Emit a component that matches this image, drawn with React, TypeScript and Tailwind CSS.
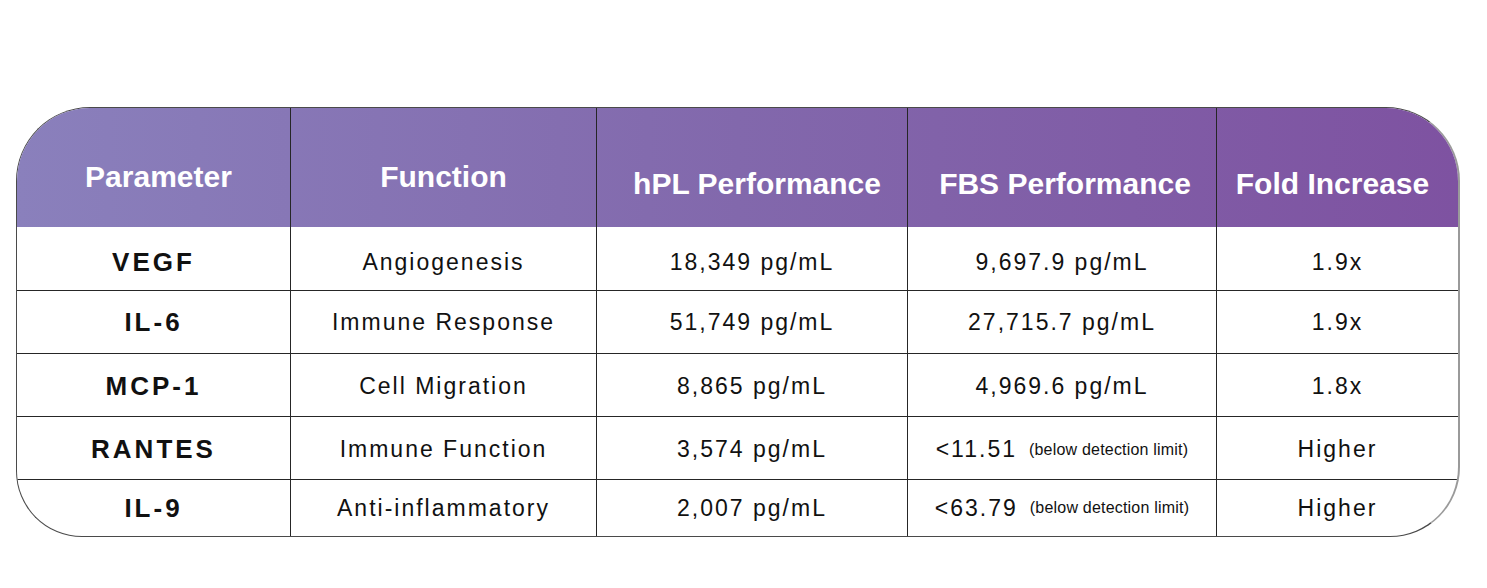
const rows = [
  { param: 'VEGF', fn: 'Angiogenesis', hpl: '18,349 pg/mL', fbs: '9,697.9 pg/mL', fold: '1.9x', pad: 'pt-[7px]', h: 'h-[63px]' },
  { param: 'IL-6', fn: 'Immune Response', hpl: '51,749 pg/mL', fbs: '27,715.7 pg/mL', fold: '1.9x', pad: 'pt-[1px]', h: 'h-[63px] border-t' },
  { param: 'MCP-1', fn: 'Cell Migration', hpl: '8,865 pg/mL', fbs: '4,969.6 pg/mL', fold: '1.8x', pad: 'pt-[2px]', h: 'h-[63px] border-t' },
  { param: 'RANTES', fn: 'Immune Function', hpl: '3,574 pg/mL', fbs: '<11.51', note: true, fold: 'Higher', pad: 'pt-[3px]', h: 'h-[63px] border-t' },
  { param: 'IL-9', fn: 'Anti-inflammatory', hpl: '2,007 pg/mL', fbs: '<63.79', note: true, fold: 'Higher', pad: 'pt-0', h: 'h-[57px] border-t' },
];

const App = () => {
  return (
    <div className="w-[1487px] h-[588px] bg-white pt-[107px] pl-[16px] font-['Liberation_Sans',Arial,sans-serif]">
      <div className="w-[1444px] rounded-tl-[74px] rounded-tr-[74px] rounded-bl-[66px] rounded-br-[70px] overflow-hidden border border-[#4a4a4a] border-r-[#9a9a9a] border-r-2 bg-white">
        {/* Header */}
        <div className="grid grid-cols-[274px_306px_311px_309px_1fr] h-[119px] bg-linear-to-r from-[#8a80bc] via-[#8268ac] to-[#7e52a1] text-white font-bold text-[30px]">
          <div className="flex items-center justify-center pt-[18px] pl-[10px] border-r border-[#262626]">Parameter</div>
          <div className="flex items-center justify-center pt-[18px] border-r border-[#262626]">Function</div>
          <div className="flex items-center justify-center pt-[32px] pl-[10px] border-r border-[#262626]">hPL Performance</div>
          <div className="flex items-center justify-center pt-[32px] pl-[6px] border-r border-[#262626]">FBS Performance</div>
          <div className="flex items-center justify-center pt-[32px] pr-[10px]">Fold Increase</div>
        </div>

        {/* Body */}
        {rows.map((r) => (
          <div
            key={r.param}
            className={`grid grid-cols-[274px_306px_311px_309px_1fr] text-[#111] border-[#262626] ${r.h}`}
          >
            <div className={`flex items-center justify-center border-r border-[#262626] font-bold text-[26px] tracking-[3px] ${r.pad}`}>
              {r.param}
            </div>
            <div className={`flex items-center justify-center border-r border-[#262626] text-[23px] tracking-[2px] ${r.pad}`}>
              {r.fn}
            </div>
            <div className={`flex items-center justify-center border-r border-[#262626] text-[23px] tracking-[2px] ${r.pad}`}>
              {r.hpl}
            </div>
            <div className={`flex items-center justify-center border-r border-[#262626] text-[23px] tracking-[2px] ${r.pad}`}>
              {r.fbs}
              {r.note && (
                <span className="ml-[12px] text-[16px] tracking-[0.2px]">(below detection limit)</span>
              )}
            </div>
            <div className={`flex items-center justify-center text-[23px] tracking-[2px] ${r.pad}`}>
              {r.fold}
            </div>
          </div>
        ))}
      </div>
    </div>
  );
};

export default App;
